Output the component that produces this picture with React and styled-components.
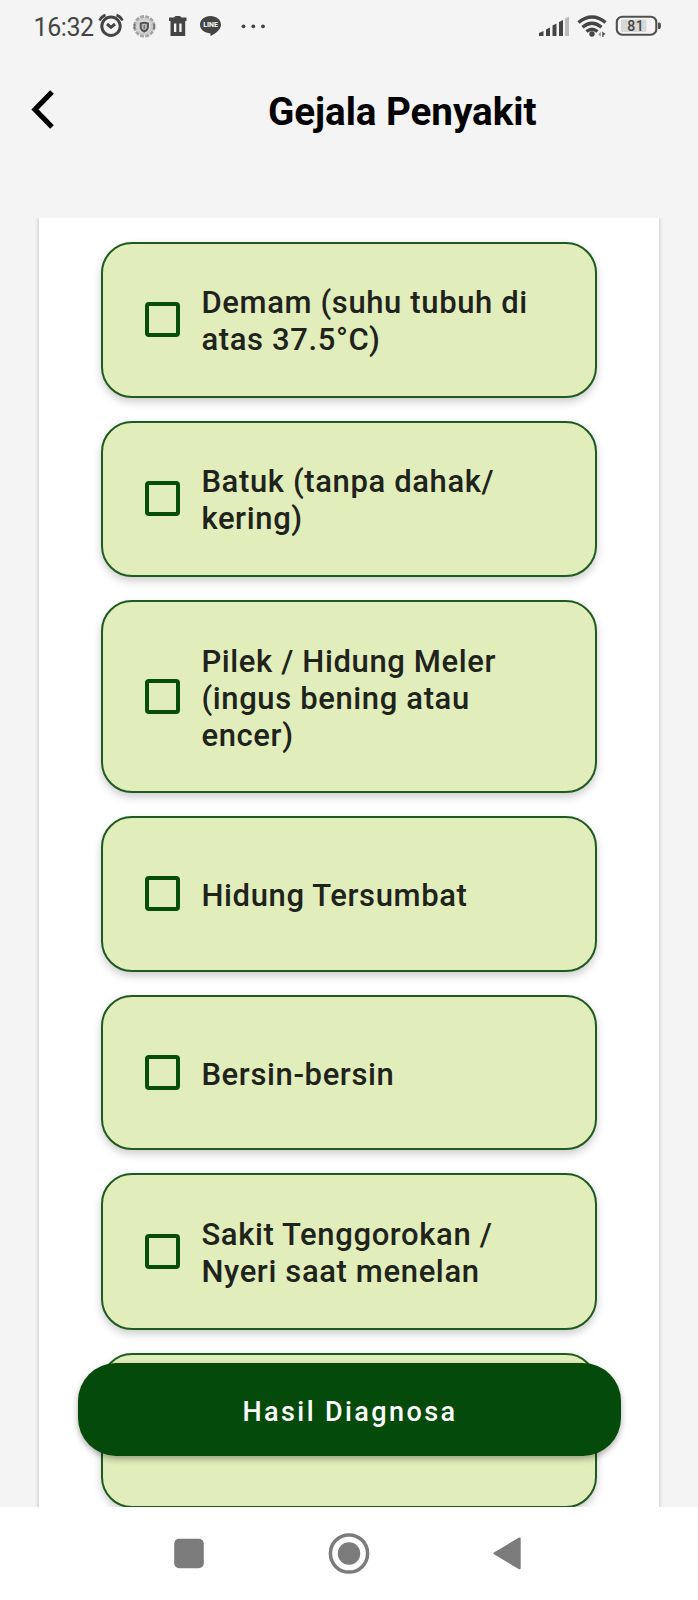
import React from "react";
import styled, { createGlobalStyle } from "styled-components";

const GlobalStyle = createGlobalStyle`
  * { box-sizing: border-box; }
  body { margin: 0; background: #f4f4f4; font-family: Roboto, "Liberation Sans", sans-serif; }
`;

const Screen = styled.div`
  width: 698px;
  height: 1600px;
  display: flex;
  flex-direction: column;
  background: #f4f4f4;
  overflow: hidden;
`;

const StatusBar = styled.div`
  flex: none;
  height: 54px;
  padding: 0 36px 2px 33px;
  display: flex;
  align-items: center;
  justify-content: space-between;
  color: #444;
`;

const StatusGroup = styled.div`
  display: flex;
  align-items: center;
  svg { display: block; }
`;

const Clock = styled.span`
  width: 65px;
  font-size: 25px;
  line-height: 30px;
  letter-spacing: -0.4px;
  padding: 4px 0 0 0.5px;
`;

const Header = styled.header`
  flex: none;
  height: 164px;
  padding: 34px 0 0 31px;
  display: flex;
  align-items: flex-start;
`;

const BackButton = styled.button`
  width: 24px;
  height: 42px;
  padding: 0;
  border: 0;
  background: none;
  svg { display: block; }
`;

const Title = styled.h1`
  margin: 2px 0 0 213px;
  font-size: 38.6px;
  line-height: 44px;
  font-weight: 700;
  letter-spacing: -0.04px;
  color: #000;
  white-space: nowrap;
`;

const Content = styled.main`
  flex: none;
  height: 1289px;
  padding: 0 39px;
  position: relative;
  overflow: hidden;
`;

const Sheet = styled.section`
  height: 1400px;
  padding: 23.6px 62px 0;
  display: flex;
  flex-direction: column;
  gap: 23px;
  background: #fff;
  box-shadow: 0 0 4px rgba(0, 0, 0, 0.25);
`;

const Card = styled.label`
  flex: none;
  height: ${(p) => p.$height}px;
  padding: 0 60px 0 42.4px;
  display: flex;
  align-items: center;
  background: #e1edbb;
  border: 2px solid #1f5a20;
  border-radius: 31px;
  box-shadow: 0 4px 8px rgba(0, 0, 0, 0.2);
`;

const Checkbox = styled.input`
  appearance: none;
  flex: none;
  width: 35px;
  height: 35px;
  margin: 0 21px 0.6px 0;
  border: 4px solid #064d0a;
  border-radius: 4px;
`;

const Label = styled.span`
  padding-top: 3.4px;
  font-size: 31px;
  line-height: 37px;
  font-weight: 500;
  letter-spacing: 0.63px;
  color: #20231b;
  white-space: pre;
`;

const ResultButton = styled.button`
  position: absolute;
  left: 77.5px;
  top: 1145px;
  width: 543px;
  height: 93px;
  padding: 4px 0 0 2px;
  border: 0;
  border-radius: 38px;
  background: #044b0b;
  color: #fff;
  font-family: inherit;
  font-size: 27px;
  font-weight: 500;
  letter-spacing: 2.4px;
  box-shadow: 0 3px 6px rgba(0, 0, 0, 0.32);
`;

const NavBar = styled.nav`
  flex: 1;
  padding: 26px 177px 0 174px;
  display: flex;
  align-items: flex-start;
  justify-content: space-between;
  background: #fff;
  svg { display: block; }
`;

const symptoms = [
  { text: "Demam (suhu tubuh di\natas 37.5°C)", height: 156 },
  { text: "Batuk (tanpa dahak/\nkering)", height: 156 },
  { text: "Pilek / Hidung Meler\n(ingus bening atau\nencer)", height: 193.8 },
  { text: "Hidung Tersumbat", height: 155.5 },
  { text: "Bersin-bersin", height: 155 },
  { text: "Sakit Tenggorokan /\nNyeri saat menelan", height: 157 },
  { text: "", height: 155 },
];

const NoticeIcons = () => (
  <svg width="170" height="30" viewBox="98 11 170 30">
    <g fill="none" stroke="#444" strokeWidth="2.6">
      <circle cx="111" cy="26.3" r="9.2" strokeWidth="3" />
      <path d="M107 24l4 3.300 4-3.300" strokeWidth="3" />
      <path d="M99.500 20.500q2-4 6-5.500M122.500 20.500q-2-4-6-5.500" />
    </g>
    <g>
      <circle cx="144.300" cy="26.300" r="9.800" fill="#ddd" stroke="#a5a5a5" strokeWidth="2.800" strokeDasharray="4 1.200" />
      <circle cx="144.300" cy="26.300" r="7.400" fill="#dadada" stroke="#c4c4c4" />
      <path d="M134.500 24v5M154.200 24v5" stroke="#777" strokeWidth="1.800" />
      <path d="M140.700 23.500q3.600-1.500 7.200 0v4.500q-.5 2-3.600 3.500-3.100-1.500-3.600-3.500z" fill="#bbb" stroke="#555" strokeWidth="2" />
      <path d="M144.300 25v4" stroke="#777" strokeWidth="1.500" />
    </g>
    <g fill="#444">
      <path d="M169 17.500h5l1.500-1.500h4.500l1.500 1.500h5v3.500H169z" />
      <path fillRule="evenodd" d="M170.500 20.500h14.700v15.500h-14.700zM174 23.500v8.500h2.300v-8.500zM179.300 23.500v8.500h2.300v-8.500z" />
      <path d="M210.500 16c6 0 10.500 3.800 10.500 8.800 0 5-5.500 8.700-10.500 11.400v-2.800c-6-.3-10.500-3.800-10.500-8.600 0-5 4.500-8.800 10.500-8.800z" />
      <circle cx="243.500" cy="26.300" r="1.900" />
      <circle cx="253.300" cy="26.300" r="1.900" />
      <circle cx="263" cy="26.300" r="1.900" />
    </g>
    <text x="210.500" y="27.300" fontSize="7" fontWeight="700" textAnchor="middle" fill="#fff">LINE</text>
  </svg>
);

const SignalIcons = () => (
  <svg width="124" height="30" viewBox="538 11 124 30">
    <g fill="#444">
      <path d="M539 36v-3l4.500-2v5zM546 36v-6.500l4-2V36zM552.500 36V25.500l4-2V36zM559 36V22l4-2v16z" />
      <path d="M565 36V18.500l4-2V36z" fill="#bbb" />
      <circle cx="592" cy="34" r="2.700" />
      <path d="M602.300 37v-5.500l3.200 2.500-2 1v2z" />
      <path d="M600.800 31.500v5.200l-2.500-2.200z" fill="#999" />
    </g>
    <g fill="none" stroke="#444" strokeWidth="3.400">
      <path d="M578.500 22.500q13.500-11 27 0" />
      <path d="M582.500 27.300q9.500-8 19 0" />
      <path d="M586.500 31.500q5.500-4.500 11 0" />
    </g>
    <rect x="616.800" y="16.700" width="39.500" height="18" rx="5.500" fill="none" stroke="#505050" strokeWidth="2.100" />
    <rect x="621" y="19.500" width="25.500" height="12.500" rx="1" fill="#d7d7d7" />
    <path d="M658.500 23h1.500q1 2.700 0 5.500h-1.500z" fill="#505050" stroke="#505050" />
    <text x="635.700" y="31" fontSize="14" fontWeight="500" textAnchor="middle" letterSpacing=".5" fill="#444">81</text>
  </svg>
);

export default function App() {
  return (
    <Screen>
      <GlobalStyle />
      <StatusBar>
        <StatusGroup>
          <Clock>16:32</Clock>
          <NoticeIcons />
        </StatusGroup>
        <StatusGroup>
          <SignalIcons />
        </StatusGroup>
      </StatusBar>
      <Header>
        <BackButton aria-label="Kembali">
          <svg width="24" height="42" viewBox="31 88 24 42">
            <path d="M52 92L35 109.500 52 127" fill="none" stroke="#000" strokeWidth="5.200" />
          </svg>
        </BackButton>
        <Title>Gejala Penyakit</Title>
      </Header>
      <Content>
        <Sheet>
          {symptoms.map((s, i) => (
            <Card key={i} $height={s.height}>
              <Checkbox type="checkbox" />
              <Label>{s.text}</Label>
            </Card>
          ))}
        </Sheet>
        <ResultButton>Hasil Diagnosa</ResultButton>
      </Content>
      <NavBar>
        <svg width="30" height="42" viewBox="174 1533 30 42">
          <rect x="174.200" y="1538.700" width="29.600" height="29.600" rx="5" fill="#7b7b7b" />
        </svg>
        <svg width="42" height="42" viewBox="328 1533 42 42">
          <circle cx="349" cy="1553.500" r="18.600" fill="none" stroke="#7b7b7b" strokeWidth="3.500" />
          <circle cx="349" cy="1553.500" r="11.200" fill="#7b7b7b" />
        </svg>
        <svg width="28" height="42" viewBox="493 1533 28 42">
          <path d="M494 1552.500L519 1537.500q1.700-.5 1.700 1v29.700q0 1.500-1.700 1L494 1554.300q-1.200-.9 0-1.800z" fill="#7b7b7b" />
        </svg>
      </NavBar>
    </Screen>
  );
}
